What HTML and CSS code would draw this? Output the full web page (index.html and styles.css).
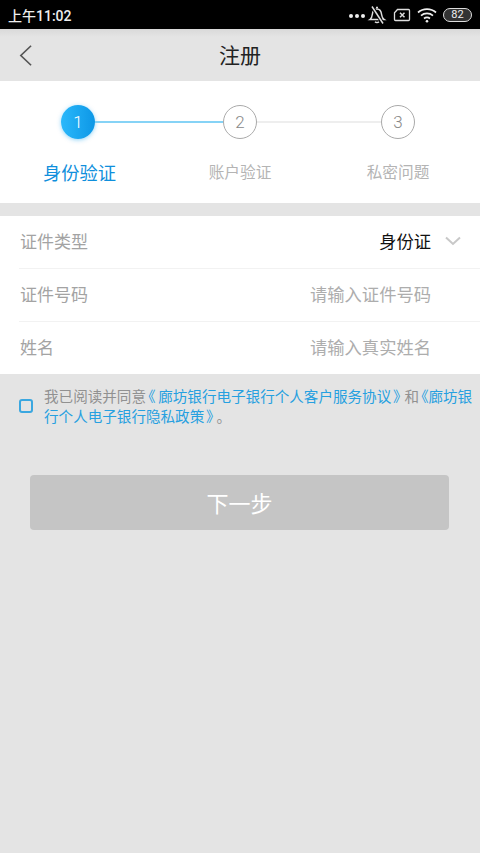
FILE: index.html
```html
<!DOCTYPE html>
<html lang="zh-CN">
<head>
    <meta charset="UTF-8">
    <meta name="viewport" content="width=device-width, initial-scale=1.0">
    <title>注册</title>
    <link rel="stylesheet" href="styles.css">
</head>
<body>
    <div class="statusbar">
        <span class="time">上午11:02</span>
        <div class="status-icons">
            <span class="dots"><i></i><i></i><i></i></span>
            <svg class="icon-bell" width="20" height="20" viewBox="0 0 20 20" fill="none" stroke="#ddd" stroke-width="1.5">
                <path d="M3 14.500c1.500-1 2-2.500 2.300-5C5.700 6 7.500 4 10 4c2.500 0 4.200 2 4.600 5.500.3 2.500.8 4 2.400 5z"/>
                <path d="M8 16.800c1 1 3 1 4 0"/>
                <path d="M9 2.500h2"/>
                <path d="M5 1.500l11 17" stroke="#000" stroke-width="3.500"/>
                <path d="M5 1.500l11 17"/>
            </svg>
            <svg class="icon-sim" width="18" height="14" viewBox="0 0 18 14" fill="none" stroke="#ddd" stroke-width="1.300">
                <path d="M4.500 1.500h11a1 1 0 0 1 1 1v9a1 1 0 0 1-1 1h-13a1 1 0 0 1-1-1V4.700z"/>
                <path d="M7 4.800l4.500 4.500M11.500 4.800L7 9.300" stroke-width="1.500"/>
            </svg>
            <svg class="icon-wifi" width="20" height="16" viewBox="0 0 20 16" fill="none" stroke="#eee" stroke-width="1.700">
                <path d="M1 5.500c5-4.600 13-4.600 18 0"/>
                <path d="M4 8.700c3.400-3 8.600-3 12 0"/>
                <path d="M7 11.500c1.800-1.400 4.200-1.400 6 0"/>
                <circle cx="10" cy="14.300" r="1.300" fill="#eee" stroke="none"/>
            </svg>
            <span class="battery">82</span>
        </div>
    </div>

    <div class="navbar">
        <svg class="back" width="13" height="23" viewBox="0 0 14 24" fill="none" stroke="#555" stroke-width="1.800">
            <path d="M13 1.500L2 12l11 10.500"/>
        </svg>
        <span class="nav-title">注册</span>
    </div>

    <div class="steps">
        <div class="track">
            <span class="dot dot-active">1</span>
            <span class="line line-active"></span>
            <span class="dot">2</span>
            <span class="line"></span>
            <span class="dot">3</span>
        </div>
        <div class="labels">
            <span class="label label-active">身份验证</span>
            <span class="label">账户验证</span>
            <span class="label">私密问题</span>
        </div>
    </div>

    <div class="form">
        <div class="row">
            <span class="row-name">证件类型</span>
            <span class="row-value">身份证</span>
            <svg class="chevron" width="16" height="10" viewBox="0 0 16 10" fill="none" stroke="#c8c8c8" stroke-width="2">
                <path d="M1 1.500l7 6.500 7-6.500"/>
            </svg>
        </div>
        <div class="row">
            <span class="row-name">证件号码</span>
            <span class="row-hint">请输入证件号码</span>
        </div>
        <div class="row">
            <span class="row-name">姓名</span>
            <span class="row-hint">请输入真实姓名</span>
        </div>
    </div>

    <div class="agree">
        <span class="checkbox"></span>
        <p class="agree-text">我已阅读并同意<a><span class="bk bk-open">《</span>廊坊银行电子银行个人客户服务协议<span class="bk bk-close">》</span></a>和<a><span class="bk bk-tight">《</span>廊坊银</a><br><a>行个人电子银行隐私政策<span class="bk bk-end">》</span></a>。</p>
    </div>

    <div class="next">下一步</div>
</body>
</html>
```

FILE: styles.css
```css
body {
    margin: 0;
    height: 853px;
    overflow: hidden;
    background-color: #e4e4e4;
    font-family: "Noto Sans CJK SC", "Liberation Sans", sans-serif;
}
.statusbar {
    height: 29px;
    padding: 0 8px;
    display: flex;
    align-items: center;
    justify-content: space-between;
    background-color: #000;
    color: #eee;
}
.time {
    font-family: "Roboto", "Noto Sans CJK SC", sans-serif;
    font-size: 14px;
    font-weight: 500;
}
.status-icons {
    display: flex;
    align-items: center;
}
.dots {
    display: flex;
    gap: 2px;
    margin: 3px 2px 0 0;
}
.dots i {
    width: 4px;
    height: 4px;
    border-radius: 50%;
    background-color: #eee;
}
.icon-sim {
    margin-left: 6px;
}
.icon-wifi {
    margin-left: 6px;
}
.battery {
    width: 27px;
    height: 12px;
    margin-left: 6px;
    border: 1px solid #ddd;
    border-radius: 7px;
    background-color: #333;
    color: #eee;
    font-family: "Roboto", sans-serif;
    font-size: 11px;
    line-height: 12px;
    text-align: center;
}
.navbar {
    height: 52px;
    padding-bottom: 2px;
    box-sizing: border-box;
    display: flex;
    align-items: center;
    justify-content: center;
    position: relative;
    background: linear-gradient(#d9d9d9, #e4e4e4 8px);
}
.back {
    position: absolute;
    left: 19px;
    top: 15px;
}
.nav-title {
    font-size: 21px;
    color: #222;
}
.steps {
    height: 122px;
    background-color: #fff;
    overflow: hidden;
}
.track {
    display: flex;
    align-items: center;
    margin: 24px 0 0 61px;
}
.dot {
    width: 34px;
    height: 34px;
    box-sizing: border-box;
    flex: none;
    border: 1px solid #aaa;
    border-radius: 50%;
    font-family: "Roboto", sans-serif;
    font-size: 17px;
    font-weight: 300;
    line-height: 32px;
    text-align: center;
    color: #888;
    background-color: #fff;
}
.dot-active {
    border: none;
    line-height: 34px;
    color: #fff;
    background: linear-gradient(90deg, #2ab8fb, #0d97e6);
    box-shadow: 0 1px 4px rgba(40, 170, 240, 0.5);
}
.line {
    width: 124px;
    height: 2px;
    background-color: #eee;
}
.line-active {
    width: 128px;
    background-color: #86d3f6;
}
.labels {
    display: grid;
    grid-template-columns: 159px 162px 154px;
    margin-top: 21px;
}
.label {
    font-size: 15.700px;
    line-height: 24px;
    color: #b4b4b4;
    text-align: center;
}
.label-active {
    font-size: 18.300px;
    color: #0f8fdc;
}
.form {
    margin-top: 13px;
    padding-left: 19px;
    background-color: #fff;
}
.row {
    height: 49px;
    padding-bottom: 3px;
    display: flex;
    align-items: center;
    padding-right: 49px;
    border-bottom: 1px solid #f2f2f2;
    position: relative;
}
.row:last-child {
    border-bottom: none;
}
.row-name {
    flex: 1;
    margin-left: 1px;
    font-size: 17px;
    color: #a3a3a3;
}
.row-value {
    font-size: 17.300px;
    color: #111;
}
.row-hint {
    font-size: 17.300px;
    color: #adadad;
}
.chevron {
    position: absolute;
    right: 19px;
    top: 20px;
}
.agree {
    display: flex;
    padding: 12px 0 0 19px;
}
.checkbox {
    width: 10px;
    height: 10px;
    flex: none;
    margin: 13px 11px 0 0;
    border: 2px solid #3aa7e0;
    border-radius: 3px;
}
.agree-text {
    margin: 0;
    font-size: 14.570px;
    line-height: 20px;
    white-space: nowrap;
    color: #919191;
}
.agree-text a {
    color: #26a0e0;
}
.bk {
    font-feature-settings: "palt";
}
.bk-open {
    margin: 0 3px 0 2px;
}
.bk-close {
    margin: 0 4px 0 2px;
}
.bk-tight {
    margin-left: 2px;
}
.bk-end {
    margin: 0 3px 0 2px;
}
.next {
    height: 55px;
    margin: 49px 31px 0 30px;
    border-radius: 4px;
    background-color: #c5c5c5;
    color: #fff;
    font-size: 22px;
    line-height: 55px;
    text-align: center;
}
```
